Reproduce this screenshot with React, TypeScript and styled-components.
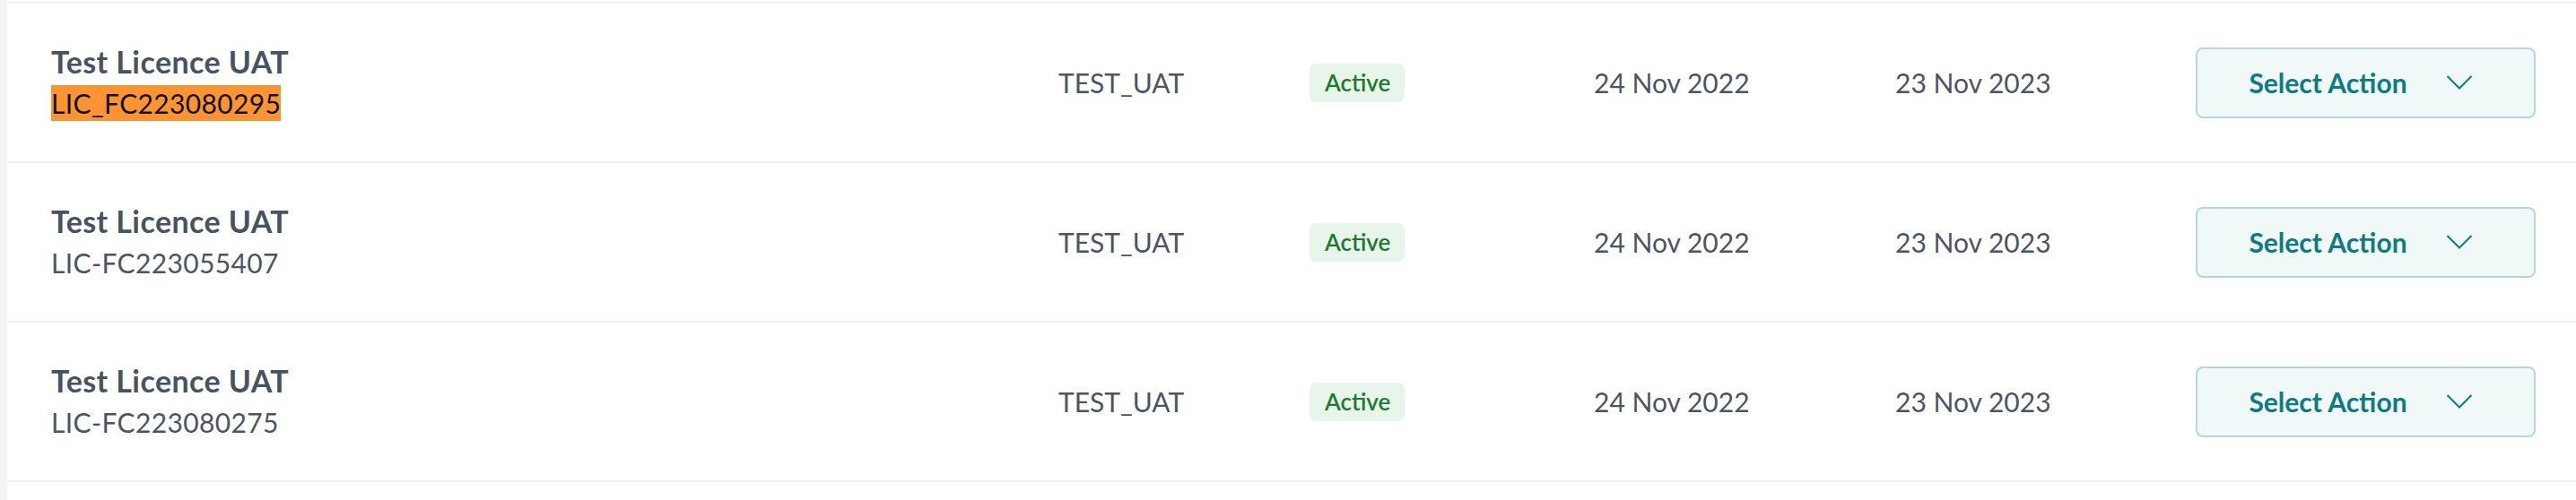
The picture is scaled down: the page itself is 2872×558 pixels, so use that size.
import React from "react";
import styled, { createGlobalStyle } from "styled-components";

const GlobalStyle = createGlobalStyle`
  html, body {
    margin: 0;
    padding: 0;
    background: #ffffff;
    font-family: Lato, "Open Sans", sans-serif;
  }
`;

const Page = styled.div`
  display: flex;
  width: 2872px;
  min-height: 558px;
  background: #ffffff;
`;

const Stripe = styled.div`
  width: 8px;
  flex: 0 0 8px;
  background: #f3f4f4;
`;

const Table = styled.div`
  flex: 1;
  display: flex;
  flex-direction: column;
  padding-top: 2px;
`;

const Row = styled.div`
  display: grid;
  grid-template-columns: 1123px 280px 317px 336px 335px 379px;
  align-items: center;
  height: 176px;
  padding-left: 49px;
  border-top: 2px solid #edf0f3;
  &:last-child {
    border-bottom: 2px solid #edf0f3;
  }
`;

const NameCell = styled.div`
  display: flex;
  flex-direction: column;
  align-items: flex-start;
`;

const Title = styled.div`
  font-size: 34px;
  line-height: 40px;
  font-weight: 700;
  letter-spacing: 0.4px;
  color: #485361;
`;

const Code = styled.span<{ $highlight?: boolean }>`
  margin-top: 6px;
  font-size: 30px;
  line-height: 40px;
  letter-spacing: 0.35px;
  color: ${(p) => (p.$highlight ? "#111111" : "#4b5563")};
  background: ${(p) => (p.$highlight ? "#fd9433" : "transparent")};
`;

const Cell = styled.div`
  font-size: 30px;
  line-height: 40px;
  color: #4b5563;
`;

const Badge = styled.span`
  justify-self: start;
  display: inline-flex;
  align-items: center;
  height: 43px;
  padding: 0 16px 0 17px;
  border-radius: 7px;
  background: #e7f5ea;
  color: #1d7a30;
  font-size: 26px;
  font-weight: 600;
`;

const ActionButton = styled.button`
  display: flex;
  align-items: center;
  justify-content: center;
  gap: 43px;
  width: 379px;
  height: 79px;
  box-sizing: border-box;
  padding: 0 11px 0 0;
  border: 2px solid #b3d9dc;
  border-radius: 8px;
  background: #f0f8f8;
  color: #0e7b82;
  font-family: Lato, "Open Sans", sans-serif;
  font-size: 30px;
  font-weight: 700;
  cursor: pointer;
`;

const Chevron = () => (
  <svg width="30" height="18" viewBox="0 0 30 18" fill="none">
    <polyline points="1.5,2 15,15.5 28.5,2" stroke="#0e7b82" strokeWidth="2" />
  </svg>
);

const rows = [
  { code: "LIC_FC223080295", highlight: true },
  { code: "LIC-FC223055407", highlight: false },
  { code: "LIC-FC223080275", highlight: false },
];

export default function App() {
  return (
    <>
      <GlobalStyle />
      <Page>
        <Stripe />
        <Table>
          {rows.map((r) => (
            <Row key={r.code}>
              <NameCell>
                <Title>Test Licence UAT</Title>
                <Code $highlight={r.highlight}>{r.code}</Code>
              </NameCell>
              <Cell>TEST_UAT</Cell>
              <Badge>Active</Badge>
              <Cell>24 Nov 2022</Cell>
              <Cell>23 Nov 2023</Cell>
              <ActionButton>
                Select Action
                <Chevron />
              </ActionButton>
            </Row>
          ))}
        </Table>
      </Page>
    </>
  );
}
